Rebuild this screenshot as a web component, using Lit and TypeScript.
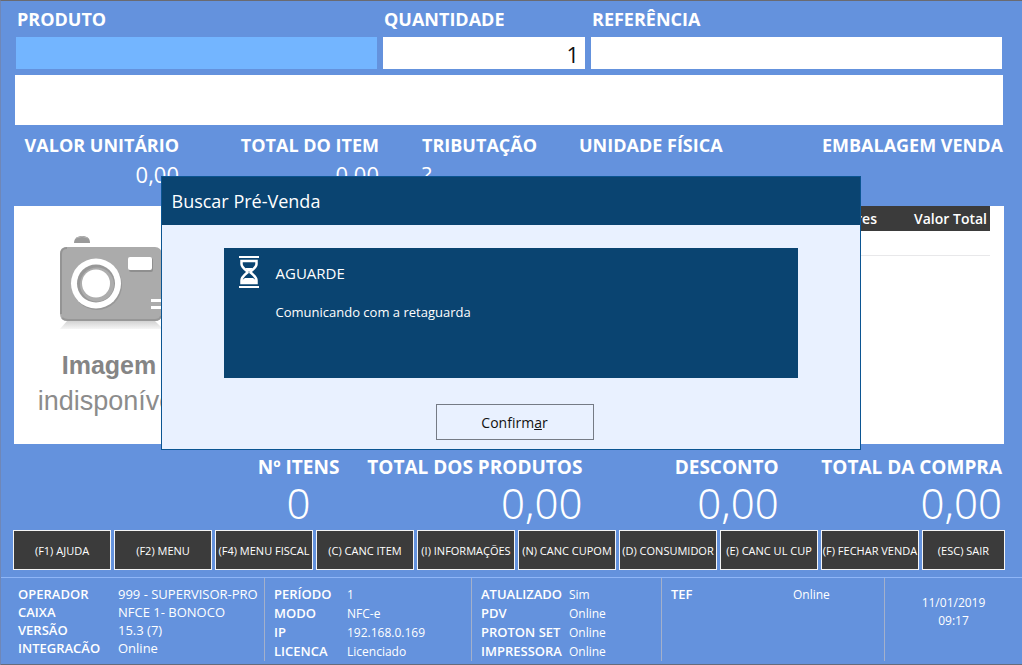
import { LitElement, html, css } from "lit";
import { customElement, property } from "lit/decorators.js";
import { classMap } from "lit/directives/class-map.js";

type Pair = [string, string];

const ACTIONS: string[] = [
  "(F1) AJUDA",
  "(F2) MENU",
  "(F4) MENU FISCAL",
  "(C) CANC ITEM",
  "(I) INFORMAÇÕES",
  "(N) CANC CUPOM",
  "(D) CONSUMIDOR",
  "(E) CANC UL CUP",
  "(F) FECHAR VENDA",
  "(ESC) SAIR",
];

const STATUS: { name: string; rows: Pair[] }[] = [
  {
    name: "operator",
    rows: [
      ["OPERADOR", "999 - SUPERVISOR-PRO"],
      ["CAIXA", "NFCE 1- BONOCO"],
      ["VERSÃO", "15.3 (7)"],
      ["INTEGRACÃO", "Online"],
    ],
  },
  {
    name: "period",
    rows: [
      ["PERÍODO", "1"],
      ["MODO", "NFC-e"],
      ["IP", "192.168.0.169"],
      ["LICENCA", "Licenciado"],
    ],
  },
  {
    name: "sync",
    rows: [
      ["ATUALIZADO", "Sim"],
      ["PDV", "Online"],
      ["PROTON SET", "Online"],
      ["IMPRESSORA", "Online"],
    ],
  },
  { name: "tef", rows: [["TEF", "Online"]] },
];

@customElement("pdv-image")
export class PdvImage extends LitElement {
  static styles = css`
    :host {
      display: flex;
      flex-direction: column;
      align-items: center;
      padding-top: 28px;
      font-family: "Liberation Sans", Arial, sans-serif;
      font-size: 27px;
      line-height: 36px;
      color: #8c8c8c;
    }
    .camera {
      display: block;
      width: 104px;
      height: 96px;
      margin-left: 4px;
    }
    .strong {
      margin-top: 17px;
      font-size: 25px;
      font-weight: bold;
      color: #858585;
    }
  `;

  render() {
    return html`
      <svg class="camera" viewBox="0 0 104 96" aria-hidden="true">
        <defs>
          <linearGradient id="shade" x1="0" y1="0" x2="0" y2="1">
            <stop offset="0" stop-color="#d2d2d2" />
            <stop offset="1" stop-color="#f6f6f6" />
          </linearGradient>
        </defs>
        <path d="M8 87H96L104 95H1Z" fill="url(#shade)" />
        <path d="M15 9C15 4 19 2 23 2C28 2 31 4 31 9Z" fill="#9a9a9a" />
        <path d="M17 4Q23 1 29 4" fill="none" stroke="#b5b5b5" stroke-width="1" />
        <rect x="1" y="13" width="102" height="74" rx="7" fill="#ababab" />
        <path d="M2 80V20Q2 14 8 14" fill="none" stroke="#949494" stroke-width="2" />
        <path d="M3 84Q5 86 9 86H96Q101 86 102 82" fill="none" stroke="#979797" stroke-width="2" />
        <circle cx="38" cy="51" r="25" fill="#989898" />
        <circle cx="37" cy="49.500" r="25" fill="#fff" />
        <circle cx="37" cy="49.500" r="19" fill="#989898" />
        <circle cx="38" cy="50.500" r="17" fill="#adadad" />
        <circle cx="37" cy="49.500" r="14" fill="#fff" />
        <rect x="70" y="24" width="24" height="14" rx="2" fill="#8f8f8f" />
        <rect x="69" y="23" width="24" height="13" rx="2" fill="#fff" />
        <path d="M92 66.500H103M92 73.500H103" stroke="#fff" stroke-width="3" />
      </svg>
      <span class="strong">Imagem</span>
      <span>indisponível</span>
    `;
  }
}

@customElement("pdv-figure")
export class PdvFigure extends LitElement {
  @property() label = "";
  @property() value = "";

  static styles = css`
    :host {
      display: block;
      white-space: nowrap;
    }
    .label {
      font-weight: 700;
      font-size: 18px;
      line-height: 28px;
    }
    .value {
      font-weight: 400;
      font-size: 22px;
      line-height: 30px;
      min-height: 30px;
    }
    :host(.total) .label {
      font-size: 19px;
    }
    :host(.total) .value {
      font-family: "Noto Sans", "Open Sans", sans-serif;
      font-weight: 350;
      font-size: 42px;
      line-height: 44px;
    }
  `;

  render() {
    return html`
      <div class="label">${this.label}</div>
      <div class="value">${this.value}</div>
    `;
  }
}

@customElement("pdv-dialog")
export class PdvDialog extends LitElement {
  static styles = css`
    :host {
      box-sizing: border-box;
      display: block;
      width: 700px;
      max-width: 100%;
      border: 1px solid #0b5592;
      background: #e9f1ff;
      color: #111;
    }
    .title {
      margin: 0;
      padding: 0 10px;
      background: #0a4471;
      color: #fff;
      font-size: 18px;
      font-weight: 400;
      line-height: 48px;
    }
    .notice {
      display: grid;
      grid-template-columns: 22px 1fr;
      column-gap: 16px;
      align-content: start;
      box-sizing: border-box;
      min-height: 130px;
      margin: 23px 62px 26px;
      padding: 8px 14px;
      background: #0a4471;
      color: #fff;
    }
    .glass {
      display: block;
      width: 22px;
      height: 32px;
    }
    .head {
      margin: 0;
      font-size: 15px;
      font-weight: 400;
      line-height: 34px;
    }
    .text {
      grid-column: 2;
      margin: 12px 0 0;
      font-size: 13px;
      line-height: 20px;
    }
    .wrap {
      display: flex;
      justify-content: center;
      padding: 0 0 9px 8px;
    }
    .confirm {
      box-sizing: border-box;
      width: 158px;
      height: 36px;
      padding: 0;
      border: 1px solid #757b85;
      background: transparent;
      color: #111;
      font-family: inherit;
      font-size: 14px;
    }
  `;

  render() {
    return html`
      <h2 class="title">Buscar Pré-Venda</h2>
      <section class="notice" role="status">
        <svg class="glass" viewBox="0 0 22 32" fill="none" aria-hidden="true">
          <path d="M1 1H21M1 31H21" stroke="#fff" stroke-width="2" />
          <path
            d="M3.500 5H18.500V8C18.500 11 15 13.500 12.500 15.500V16.500C15.500 19 18.500 21 18.500 24.500V27H3.500V24.500C3.500 21 6.500 19 9.500 16.500V15.500C7 13.500 3.500 11 3.500 8Z"
            stroke="#fff"
            stroke-width="2.500"
          />
          <path d="M7 12H15L12 15H10Z" fill="#fff" />
          <path d="M3 28Q3 24 7 22H15Q19 24 19 28Z" fill="#fff" />
        </svg>
        <h3 class="head">AGUARDE</h3>
        <p class="text">Comunicando com a retaguarda</p>
      </section>
      <div class="wrap">
        <button class="confirm" type="button">Confirm<u>a</u>r</button>
      </div>
    `;
  }
}

@customElement("app-root")
export class AppRoot extends LitElement {
  static styles = css`
    :host {
      position: relative;
      display: flex;
      flex-direction: column;
      box-sizing: border-box;
      min-height: 100vh;
      border-top: 1px solid #6a6a70;
      border-left: 1px solid #6f87b8;
      border-bottom: 2px solid #646c7c;
      background: #6492dd;
      color: #fff;
      font-family: "Open Sans", "Noto Sans", sans-serif;
    }
    .entry {
      display: grid;
      grid-template-columns: 361fr 202fr 411fr;
      column-gap: 6px;
      padding: 4px 20px 0 15px;
    }
    .field {
      display: flex;
      flex-direction: column;
      min-width: 0;
    }
    .field label {
      padding-left: 1px;
      font-size: 18px;
      font-weight: 700;
      line-height: 28px;
    }
    .field input {
      box-sizing: border-box;
      width: 100%;
      height: 32px;
      margin-top: 4px;
      padding: 2px 6px 0;
      border: 0;
      outline: 0;
      background: #fff;
      color: #111;
      font-family: inherit;
      font-size: 22px;
      text-align: right;
    }
    .field .active {
      background: #73b5ff;
      text-align: left;
    }
    .description {
      height: 50px;
      margin: 6px 19px 0 14px;
      background: #fff;
    }
    .item {
      display: grid;
      grid-template-columns: 164fr 200fr 200fr 200fr 224fr;
      padding: 6px 19px 0 14px;
    }
    .right {
      text-align: right;
    }
    .inset {
      padding-left: 43px;
    }
    .work {
      display: grid;
      grid-template-columns: 190px 1fr;
      min-height: 238px;
      flex: 1;
      margin: 17px 18px 0 13px;
      background: #fff;
      color: #333;
    }
    .list {
      padding-right: 14px;
    }
    .items {
      width: 100%;
      border-collapse: collapse;
      font-size: 14px;
      line-height: 25px;
      text-align: right;
    }
    .items th {
      height: 25px;
      padding: 0 3px;
      background: #3b3b3b;
      color: #fff;
      font-weight: 600;
    }
    .items td {
      height: 24px;
      padding: 0;
      border-bottom: 1px solid #e8e8ea;
    }
    .acre {
      width: 120px;
    }
    .sum {
      width: 104px;
    }
    .totals {
      display: grid;
      grid-template-columns: 87fr 240fr 196fr 223fr;
      padding: 9px 20px 0 254px;
    }
    .center {
      text-align: center;
    }
    .actions {
      display: grid;
      grid-template-columns: repeat(9, minmax(0, 98fr)) minmax(0, 83fr);
      column-gap: 3px;
      padding: 5px 17px 7px 12px;
    }
    .action {
      height: 40px;
      padding: 0;
      overflow: hidden;
      border: 1px solid #f4f4f4;
      background: #3b3b3b;
      color: #fff;
      font-family: inherit;
      font-size: 11px;
      white-space: nowrap;
    }
    .status {
      display: grid;
      grid-template-columns: 264fr 207fr 190fr 223fr 137fr;
      padding-bottom: 3px;
      border-top: 1px solid #8fb6f7;
      font-size: 12px;
      line-height: 18px;
    }
    .cell {
      box-sizing: border-box;
      height: 83px;
      margin: 0;
      padding: 7px 0 0 9px;
      border-right: 1px solid #a3b0cb;
      white-space: nowrap;
    }
    .operator {
      padding-left: 17px;
    }
    .row {
      display: grid;
      grid-template-columns: 100px 1fr;
      align-items: baseline;
    }
    .period .row {
      grid-template-columns: 73px 1fr;
    }
    .sync .row {
      grid-template-columns: 88px 1fr;
    }
    .tef .row {
      grid-template-columns: 122px 1fr;
    }
    .row dt {
      font-size: 13px;
      font-weight: 600;
    }
    .row dd {
      margin: 0;
    }
    .operator dd {
      font-size: 13px;
    }
    .clock {
      display: flex;
      flex-direction: column;
      align-items: center;
      padding-top: 16px;
    }
    .overlay {
      position: absolute;
      inset: 0;
      display: flex;
      justify-content: center;
      align-items: flex-start;
      padding: 175px 2px 0 0;
    }
  `;

  render() {
    return html`
      <div class="entry">
        <div class="field">
          <label for="product">PRODUTO</label>
          <input id="product" class="active" />
        </div>
        <div class="field">
          <label for="quantity">QUANTIDADE</label>
          <input id="quantity" value="1" />
        </div>
        <div class="field">
          <label for="reference">REFERÊNCIA</label>
          <input id="reference" />
        </div>
      </div>
      <div class="description"></div>
      <div class="item">
        <pdv-figure class="right" label="VALOR UNITÁRIO" value="0,00"></pdv-figure>
        <pdv-figure class="right" label="TOTAL DO ITEM" value="0,00"></pdv-figure>
        <pdv-figure class="inset" label="TRIBUTAÇÃO" value="?"></pdv-figure>
        <pdv-figure label="UNIDADE FÍSICA"></pdv-figure>
        <pdv-figure class="right" label="EMBALAGEM VENDA"></pdv-figure>
      </div>
      <div class="work">
        <pdv-image></pdv-image>
        <div class="list">
          <table class="items">
            <thead>
              <tr>
                <th></th>
                <th class="acre">Acres</th>
                <th class="sum">Valor Total</th>
              </tr>
            </thead>
            <tbody>
              <tr>
                <td></td>
                <td></td>
                <td></td>
              </tr>
            </tbody>
          </table>
        </div>
      </div>
      <div class="totals">
        <pdv-figure class="total center" label="Nº ITENS" value="0"></pdv-figure>
        <pdv-figure class="total right" label="TOTAL DOS PRODUTOS" value="0,00"></pdv-figure>
        <pdv-figure class="total right" label="DESCONTO" value="0,00"></pdv-figure>
        <pdv-figure class="total right" label="TOTAL DA COMPRA" value="0,00"></pdv-figure>
      </div>
      <nav class="actions">
        ${ACTIONS.map((a) => html`<button class="action" type="button">${a}</button>`)}
      </nav>
      <footer class="status">
        ${STATUS.map(
          (group) => html`
            <dl class=${classMap({ cell: true, [group.name]: true })}>
              ${group.rows.map(
                ([k, v]) => html`<div class="row"><dt>${k}</dt><dd>${v}</dd></div>`
              )}
            </dl>
          `
        )}
        <div class="clock">
          <span>11/01/2019</span>
          <span>09:17</span>
        </div>
      </footer>
      <div class="overlay">
        <pdv-dialog role="dialog" aria-label="Buscar Pré-Venda"></pdv-dialog>
      </div>
    `;
  }
}
